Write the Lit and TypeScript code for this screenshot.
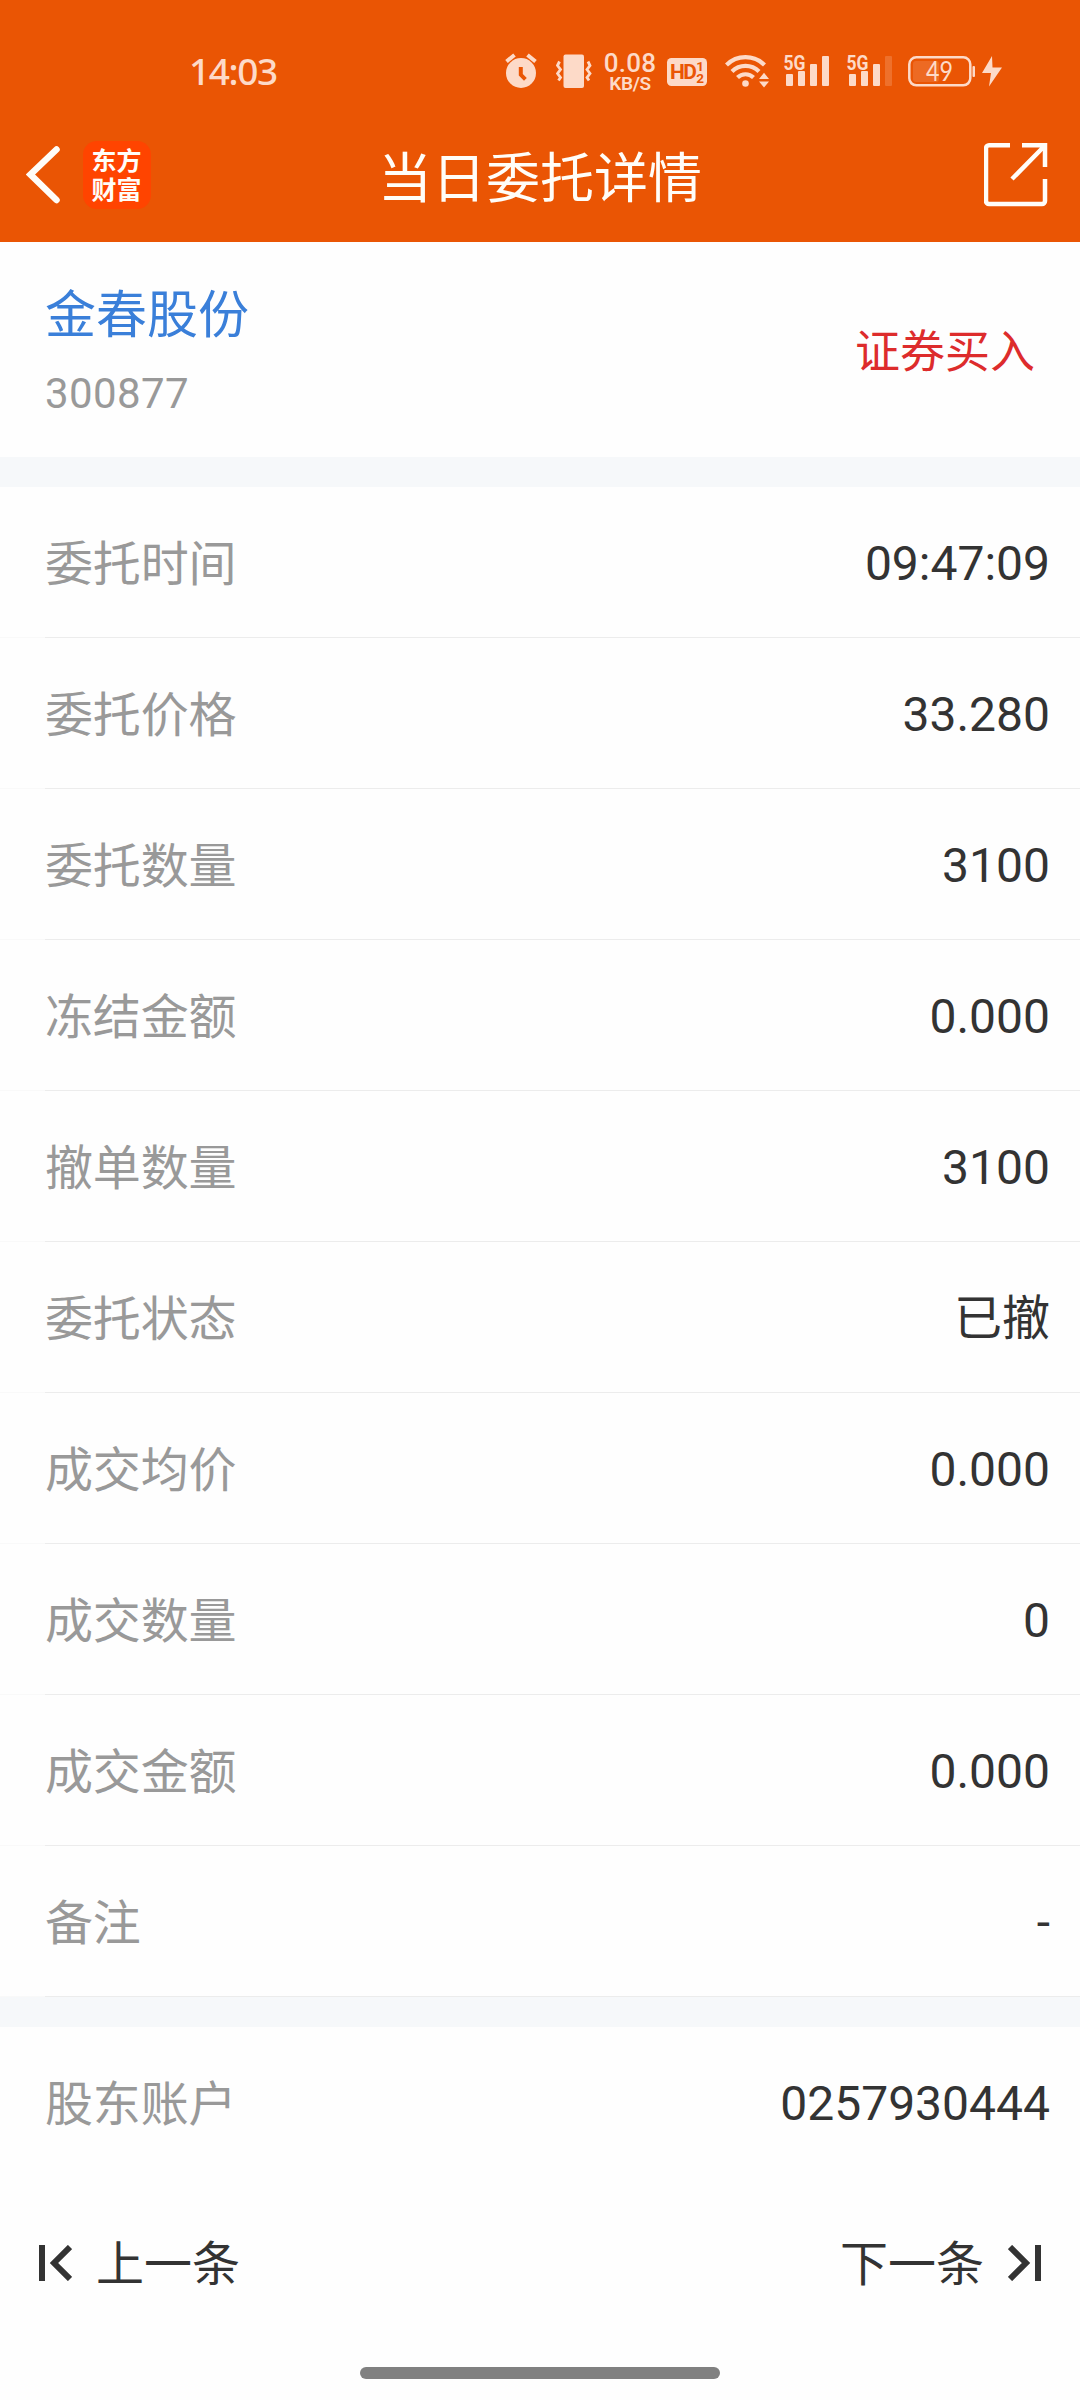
import { LitElement, html, css } from "lit";
import { customElement, property } from "lit/decorators.js";

interface Field {
  label: string;
  value: string;
}

const ORDER_FIELDS: Field[] = [
  { label: "委托时间", value: "09:47:09" },
  { label: "委托价格", value: "33.280" },
  { label: "委托数量", value: "3100" },
  { label: "冻结金额", value: "0.000" },
  { label: "撤单数量", value: "3100" },
  { label: "委托状态", value: "已撤" },
  { label: "成交均价", value: "0.000" },
  { label: "成交数量", value: "0" },
  { label: "成交金额", value: "0.000" },
  { label: "备注", value: "-" },
];

@customElement("status-bar")
export class StatusBar extends LitElement {
  static styles = css`
    :host {
      display: flex;
      align-items: flex-start;
      height: 117px;
      padding: 50px 78px 0 189px;
      box-sizing: border-box;
      color: #fddac8;
      font-family: "Noto Sans", sans-serif;
    }
    .clock {
      flex: 1;
      font-size: 37px;
      line-height: 42px;
      font-weight: 500;
      letter-spacing: -1.4px;
    }
    .icons {
      display: flex;
      flex: none;
    }
    svg {
      display: block;
      flex: none;
      height: 42px;
      fill: #fddac8;
      font-family: Roboto, sans-serif;
    }
    .line {
      fill: none;
      stroke: #fddac8;
    }
    .cut {
      fill: #ea5504;
    }
    .dim {
      opacity: 0.2;
    }
    .vibrate {
      margin: 0 10px 0 17px;
    }
    .speed {
      display: flex;
      flex-direction: column;
      align-items: center;
      width: 54px;
      height: 42px;
      padding-top: 3px;
      box-sizing: border-box;
      font-family: Roboto, sans-serif;
      white-space: nowrap;
    }
    .rate {
      font-size: 26px;
      line-height: 21px;
      font-weight: 500;
      letter-spacing: 0.2px;
    }
    .unit {
      font-size: 19px;
      line-height: 19px;
      font-weight: 600;
      letter-spacing: -0.4px;
    }
    .hd {
      display: flex;
      align-items: center;
      justify-content: center;
      width: 40px;
      height: 28px;
      margin: 8px 17px 0 10px;
      border-radius: 4.5px;
      background: #fddac8;
      color: #ea5504;
      font: 700 21px/28px Roboto, sans-serif;
      letter-spacing: -1.5px;
    }
    .sims {
      display: flex;
      flex-direction: column;
      font-size: 13.5px;
      line-height: 12.5px;
      letter-spacing: 0;
      margin-left: 1px;
    }
    .signal-a {
      margin: 0 15px 0 13px;
    }
    .battery {
      margin: 0 6px 0 14px;
    }
  `;

  private signal(x: number, dimLast: boolean) {
    return html`<svg width="48" viewBox="${x} 50 48 42">
      <text x=${x + 0.5} y="69.500" font-size="21" font-weight="700" textLength="22" lengthAdjust="spacingAndGlyphs">5G</text>
      <rect x=${x + 3} y="74" width="7" height="12" rx="1" />
      <rect x=${x + 15} y="71" width="7" height="15" rx="1" />
      <rect x=${x + 27} y="64" width="7" height="22" rx="1" />
      <rect class=${dimLast ? "dim" : ""} x=${x + 39} y="56" width="7" height="30" rx="1" />
    </svg>`;
  }

  render() {
    return html`
      <span class="clock">14:03</span>
      <div class="icons">
        <svg width="36" viewBox="504 50 36 42">
          <circle cx="522" cy="73" r="15" />
          <path class="line" stroke-width="4" d="M507.500 61.500l8-6.500M536.500 61.500l-8-6.500" />
          <path d="M519.800 67h4v7l4 4-2.800 2.800-5.200-5.300z" class="cut" />
        </svg>
        <svg class="vibrate" width="37" viewBox="557 50 37 42">
          <rect x="564.500" y="54.500" width="20.500" height="33.500" rx="2" />
          <path class="line" stroke-width="2.800" d="M560.500 61.500l-2 4 3 4-3 4 3 4-2 3M589 61.500l2 4-3 4 3 4-3 4 2 3" />
        </svg>
        <div class="speed"><div class="rate">0.08</div><div class="unit">KB/S</div></div>
        <div class="hd">HD<div class="sims"><div>1</div><div>2</div></div></div>
        <svg width="46" viewBox="724 50 46 42">
          <g class="line" stroke-width="4.200">
            <path d="M726.500 65a27 27 0 0 1 38 0" />
            <path d="M732 71.500a19 19 0 0 1 27 0" />
            <path d="M737.500 77.500a11.500 11.500 0 0 1 16 0" />
          </g>
          <circle cx="745.500" cy="83.500" r="3.300" />
          <path d="M759 79l5-6.300 5 6.300zM759 81.500h10l-5 6z" />
        </svg>
        <div class="signal-a">${this.signal(783, false)}</div>
        ${this.signal(846, true)}
        <svg class="battery" width="68" viewBox="908 50 68 42">
          <rect class="line" x="909.300" y="57.300" width="61" height="28" rx="7" stroke-width="2.500" />
          <rect x="913" y="61" width="26" height="21" rx="3" opacity="0.160" />
          <rect x="972.500" y="66" width="2.500" height="11" rx="1" />
          <text x="926" y="80.500" font-size="26" textLength="27" lengthAdjust="spacingAndGlyphs" font-family="Lato">49</text>
        </svg>
        <svg width="20" viewBox="982 50 20 42">
          <path d="M992 56l-10 17h9l-2 13.500 13-19h-9.500z" />
        </svg>
      </div>
    `;
  }
}

@customElement("title-bar")
export class TitleBar extends LitElement {
  static styles = css`
    :host {
      display: grid;
      grid-template-columns: 1fr auto 1fr;
      align-items: center;
      height: 125px;
      padding: 0 32px 10px 26px;
      box-sizing: border-box;
      color: #fffdf8;
    }
    .left {
      display: flex;
      align-items: center;
      gap: 23px;
    }
    .logo {
      width: 68px;
      height: 68px;
      border-radius: 14px;
      background: #ff4400;
      display: flex;
      flex-direction: column;
      align-items: center;
      justify-content: center;
      font: 700 25px/29px "Noto Sans CJK SC", sans-serif;
      box-sizing: border-box;
      padding: 0 1px 2px 0;
    }
    .title {
      font-size: 54px;
      line-height: 60px;
      padding-top: 10px;
      margin-left: 6px;
    }
    svg {
      display: block;
      fill: none;
      stroke: #fffdf8;
    }
    .share {
      justify-self: end;
    }
  `;

  render() {
    return html`
      <div class="left">
        <svg width="34" height="58" viewBox="26 146 34 58">
          <path d="M56.500 149.500L30.500 174.500L56.500 200" stroke-width="6.500" stroke-linecap="round" />
        </svg>
        <div class="logo"><div>东方</div><div>财富</div></div>
      </div>
      <div class="title">当日委托详情</div>
      <svg class="share" width="64" height="64" viewBox="984 143 64 64">
        <path stroke-width="4.500" d="M1010 145.300H989a3 3 0 0 0-3 3V201a3 3 0 0 0 3 3h53a3 3 0 0 0 3-3V179M1022 145.300h23V167M1045 145.500L1012 179" />
      </svg>
    `;
  }
}

@customElement("detail-row")
export class DetailRow extends LitElement {
  @property() label = "";
  @property() value = "";

  static styles = css`
    :host {
      display: flex;
      justify-content: space-between;
      align-items: center;
      height: 151px;
      padding: 2px 30px 0 45px;
      box-sizing: border-box;
      font-size: 48px;
      line-height: 70px;
      background: linear-gradient(90deg, #f9f9f9 45px, #ececec 45px) 0 150px / 100% 1px no-repeat;
    }
    :host([plain]) {
      background: none;
    }
    .label {
      color: #999;
      padding-top: 2px;
      letter-spacing: -0.15px;
    }
    .value {
      color: #333;
    }
  `;

  render() {
    return html`<span class="label">${this.label}</span><span class="value">${this.value}</span>`;
  }
}

@customElement("app-root")
export class AppRoot extends LitElement {
  static styles = css`
    :host {
      display: flex;
      flex-direction: column;
      width: 1080px;
      height: 2400px;
      overflow: hidden;
      background: #fefefe;
      font-family: Roboto, "Noto Sans CJK SC", sans-serif;
    }
    header {
      height: 242px;
      background: #ea5504;
    }
    .stock {
      display: flex;
      justify-content: space-between;
      align-items: center;
      height: 215px;
      padding: 3px 45px 0;
      box-sizing: border-box;
    }
    .name {
      font-size: 51px;
      line-height: 74px;
      color: #3a7fd9;
    }
    .code {
      font-size: 42px;
      line-height: 60px;
      margin-top: 11px;
      letter-spacing: 0.4px;
      color: #999;
    }
    .side {
      font-size: 45px;
      line-height: 66px;
      color: #dd2c2c;
      padding-top: 4px;
    }
    .band {
      height: 30px;
      background: #f6f8fa;
    }
    .pager {
      display: flex;
      justify-content: space-between;
      align-items: center;
      height: 170px;
      padding: 0 39px;
      font-size: 48px;
      line-height: 70px;
      color: #333;
    }
    .link {
      display: flex;
      align-items: center;
      gap: 24px;
    }
    .link span {
      padding-top: 3px;
    }
    .link svg {
      fill: none;
      stroke: #333;
      stroke-width: 6;
    }
    .pill {
      width: 360px;
      height: 12px;
      border-radius: 6px;
      background: #808080;
      margin: 19px auto 0;
    }
  `;

  render() {
    return html`
      <header>
        <status-bar></status-bar>
        <title-bar></title-bar>
      </header>
      <section class="stock">
        <div>
          <div class="name">金春股份</div>
          <div class="code">300877</div>
        </div>
        <div class="side">证券买入</div>
      </section>
      <div class="band"></div>
      ${ORDER_FIELDS.map((f) => html`<detail-row .label=${f.label} .value=${f.value}></detail-row>`)}
      <div class="band"></div>
      <detail-row plain .label=${"股东账户"} .value=${"0257930444"}></detail-row>
      <nav class="pager">
        <div class="link">
          <svg width="33" height="36" viewBox="0 0 33 36"><path d="M3 0V36M31 2L15 18L31 34" /></svg>
          <span>上一条</span>
        </div>
        <div class="link">
          <span>下一条</span>
          <svg width="33" height="36" viewBox="0 0 33 36"><path d="M30 0V36M2 2L18 18L2 34" /></svg>
        </div>
      </nav>
      <div class="pill"></div>
    `;
  }
}
